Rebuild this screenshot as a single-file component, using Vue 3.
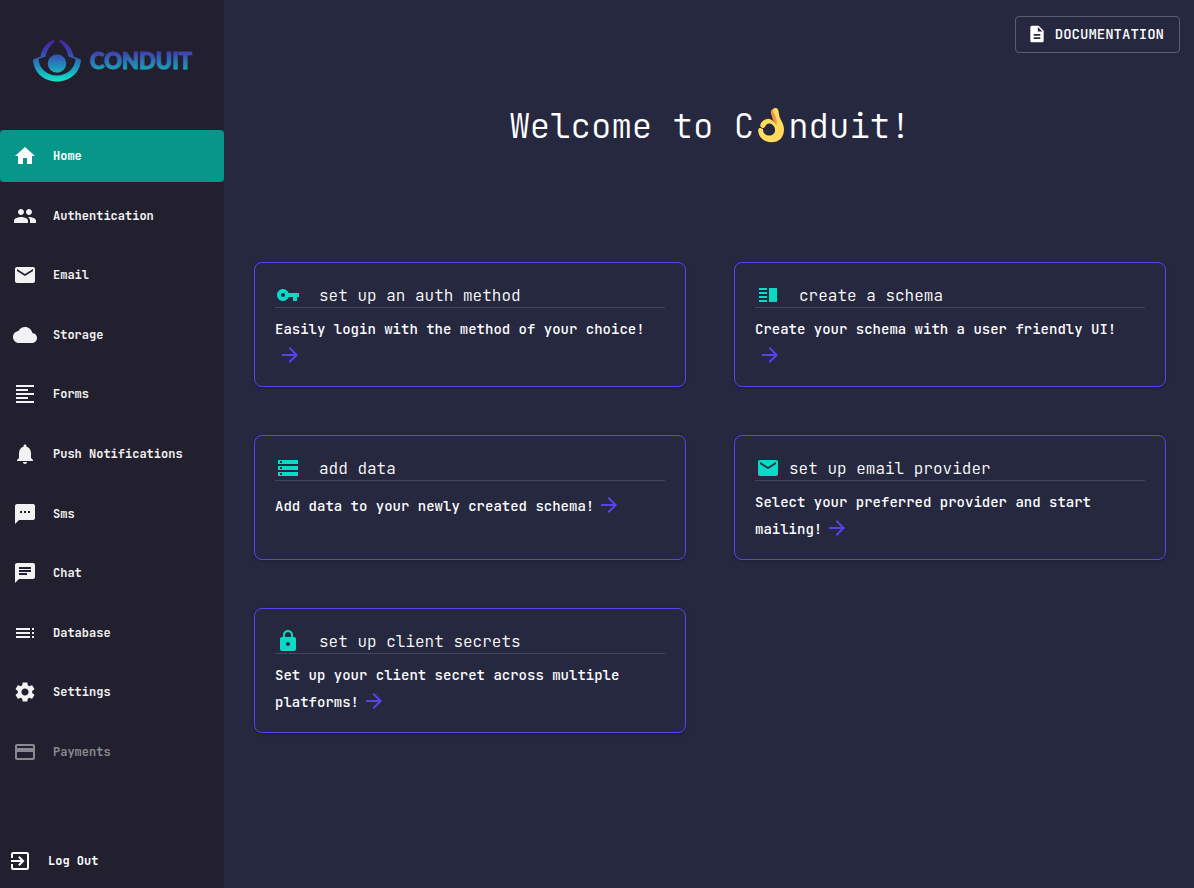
<script setup>
const icons = {
  home: 'M10 20v-6h4v6h5v-8h3L12 3 2 12h3v8z',
  people: 'M16 11c1.66 0 2.99-1.34 2.99-3S17.66 5 16 5c-1.66 0-3 1.34-3 3s1.34 3 3 3zm-8 0c1.66 0 2.99-1.34 2.99-3S9.66 5 8 5C6.34 5 5 6.34 5 8s1.34 3 3 3zm0 2c-2.33 0-7 1.17-7 3.5V19h14v-2.5c0-2.33-4.67-3.5-7-3.5zm8 0c-.29 0-.62.02-.97.05 1.16.84 1.97 1.97 1.97 3.45V19h6v-2.5c0-2.33-4.67-3.5-7-3.5z',
  email: 'M20 4H4c-1.1 0-1.99.9-1.99 2L2 18c0 1.1.9 2 2 2h16c1.1 0 2-.9 2-2V6c0-1.1-.9-2-2-2zm0 4l-8 5-8-5V6l8 5 8-5v2z',
  cloud: 'M19.35 10.04C18.67 6.59 15.64 4 12 4 9.11 4 6.6 5.64 5.35 8.04 2.34 8.36 0 10.91 0 14c0 3.31 2.69 6 6 6h13c2.76 0 5-2.24 5-5 0-2.64-2.05-4.78-4.65-4.96z',
  forms: 'M15 15H3v2h12v-2zm0-8H3v2h12V7zM3 13h18v-2H3v2zm0 8h18v-2H3v2zM3 3v2h18V3H3z',
  bell: 'M12 22c1.1 0 2-.9 2-2h-4c0 1.1.89 2 2 2zm6-6v-5c0-3.07-1.64-5.64-4.5-6.32V4c0-.83-.67-1.5-1.5-1.5s-1.5.67-1.5 1.5v.68C7.63 5.36 6 7.92 6 11v5l-2 2v1h16v-1l-2-2z',
  sms: 'M20 2H4c-1.1 0-1.99.9-1.99 2L2 22l4-4h14c1.1 0 2-.9 2-2V4c0-1.1-.9-2-2-2zM9 11H7V9h2v2zm4 0h-2V9h2v2zm4 0h-2V9h2v2z',
  chat: 'M20 2H4c-1.1 0-1.99.9-1.99 2L2 22l4-4h14c1.1 0 2-.9 2-2V4c0-1.1-.9-2-2-2zM6 9h12v2H6V9zm8 5H6v-2h8v2zm4-6H6V6h12v2z',
  toc: 'M3 9h14V7H3v2zm0 4h14v-2H3v2zm0 4h14v-2H3v2zm16 0h2v-2h-2v2zm0-10v2h2V7h-2zm0 6h2v-2h-2v2z',
  settings: 'M19.14 12.94c.04-.3.06-.61.06-.94 0-.32-.02-.64-.07-.94l2.03-1.58c.18-.14.23-.41.12-.61l-1.92-3.32c-.12-.22-.37-.29-.59-.22l-2.39.96c-.5-.38-1.03-.7-1.62-.94l-.36-2.54c-.04-.24-.24-.41-.48-.41h-3.84c-.24 0-.43.17-.47.41l-.36 2.54c-.59.24-1.13.57-1.62.94l-2.39-.96c-.22-.08-.47 0-.59.22L2.74 8.87c-.12.21-.08.47.12.61l2.03 1.58c-.05.3-.09.63-.09.94s.02.64.07.94l-2.03 1.58c-.18.14-.23.41-.12.61l1.92 3.32c.12.22.37.29.59.22l2.39-.96c.5.38 1.03.7 1.62.94l.36 2.54c.05.24.24.41.48.41h3.84c.24 0 .44-.17.47-.41l.36-2.54c.59-.24 1.13-.56 1.62-.94l2.39.96c.22.08.47 0 .59-.22l1.92-3.32c.12-.22.07-.47-.12-.61l-2.01-1.58zM12 15.6c-1.98 0-3.6-1.62-3.6-3.6s1.62-3.6 3.6-3.6 3.6 1.62 3.6 3.6-1.62 3.6-3.6 3.6z',
  payment: 'M20 4H4c-1.11 0-1.99.89-1.99 2L2 18c0 1.11.89 2 2 2h16c1.11 0 2-.89 2-2V6c0-1.11-.89-2-2-2zm0 14H4v-6h16v6zm0-10H4V6h16v2z',
  exit: 'M10.09 15.59L11.5 17l5-5-5-5-1.41 1.41L12.67 11H3v2h9.67l-2.58 2.59zM19 3H5c-1.11 0-2 .9-2 2v4h2V5h14v14H5v-4H3v4c0 1.1.89 2 2 2h14c1.1 0 2-.9 2-2V5c0-1.1-.9-2-2-2z',
  document: 'M14 2H6c-1.1 0-1.99.9-1.99 2L4 20c0 1.1.89 2 1.99 2H18c1.1 0 2-.9 2-2V8l-6-6zm2 16H8v-2h8v2zm0-4H8v-2h8v2zm-3-5V3.5L18.500 9H13z',
  key: 'M12.65 10C11.83 7.67 9.61 6 7 6c-3.31 0-6 2.69-6 6s2.69 6 6 6c2.61 0 4.83-1.67 5.65-4H17v4h4v-4h2v-4H12.65zM7 14c-1.1 0-2-.9-2-2s.9-2 2-2 2 .9 2 2-.9 2-2 2z',
  schema: 'M3 13h8v2H3zm0 4h8v2H3zm0-8h8v2H3zm0-4h8v2H3zm10 0h8v14h-8z',
  storage: 'M2 20h20v-4H2v4zm2-3h2v2H4v-2zM2 4v4h20V4H2zm4 3H4V5h2v2zm-4 7h20v-4H2v4zm2-3h2v2H4v-2z',
  lock: 'M18 8h-1V6c0-2.76-2.24-5-5-5S7 3.240 7 6v2H6c-1.1 0-2 .9-2 2v10c0 1.1.9 2 2 2h12c1.1 0 2-.9 2-2V10c0-1.1-.9-2-2-2zm-6 9c-1.1 0-2-.9-2-2s.9-2 2-2 2 .9 2 2-.9 2-2 2zm3.100-9H8.900V6c0-1.71 1.390-3.100 3.100-3.100s3.100 1.390 3.100 3.100v2z',
  arrow: 'M12 4l-1.410 1.410L16.170 11H4v2h12.170l-5.580 5.590L12 20l8-8z'
}

const navItems = [
  { label: 'Home', icon: 'home', active: true },
  { label: 'Authentication', icon: 'people' },
  { label: 'Email', icon: 'email' },
  { label: 'Storage', icon: 'cloud' },
  { label: 'Forms', icon: 'forms' },
  { label: 'Push Notifications', icon: 'bell' },
  { label: 'Sms', icon: 'sms' },
  { label: 'Chat', icon: 'chat' },
  { label: 'Database', icon: 'toc' },
  { label: 'Settings', icon: 'settings' },
  { label: 'Payments', icon: 'payment', disabled: true }
]

const cards = [
  { title: 'set up an auth method', icon: 'key', text: 'Easily login with the method of your choice!' },
  { title: 'create a schema', icon: 'schema', text: 'Create your schema with a user friendly UI!' },
  { title: 'add data', icon: 'storage', text: 'Add data to your newly created schema!' },
  { title: 'set up email provider', icon: 'email', text: 'Select your preferred provider and start mailing!', compact: true },
  { title: 'set up client secrets', icon: 'lock', text: 'Set up your client secret across multiple platforms!' }
]
</script>

<template>
  <div class="layout">
    <aside class="sidebar">
      <a class="brand" href="#" aria-label="Conduit">
        <svg class="logo" width="176" height="44" viewBox="0 0 176 44">
          <defs>
            <linearGradient id="brand-fill" gradientUnits="userSpaceOnUse" x1="0" y1="1" x2="0" y2="43">
              <stop offset="0" stop-color="#4a22a5" />
              <stop offset="0.28" stop-color="#3f3fb0" />
              <stop offset="0.6" stop-color="#2388bb" />
              <stop offset="1" stop-color="#0eeac8" />
            </linearGradient>
            <linearGradient id="word-fill" gradientUnits="userSpaceOnUse" x1="0" y1="13" x2="0" y2="32">
              <stop offset="0" stop-color="#4040b0" />
              <stop offset="1" stop-color="#18a9bd" />
            </linearGradient>
          </defs>
          <g fill="url(#brand-fill)">
            <circle cx="25" cy="24.500" r="9.200" />
            <path d="M21 1C22.500.7 23.300 1.800 22.300 3C17.500 7 14.800 11.500 13.500 17.500L6.500 20C7 28.500 14 36.500 25 36.500S43 28.500 43.500 20L36.500 17.500C35.200 11.500 32.500 7 27.700 3C26.700 1.800 27.500.7 29 1C36 4 40.500 10.500 41.500 17.500L49 20.500C48.500 33 38.500 42.500 25 42.500S1.500 33 1 20.500L8.500 17.500C9.500 10.500 14 4 21 1Z" />
          </g>
          <text class="wordmark" x="58" y="30" fill="url(#word-fill)" stroke="url(#word-fill)">CONDUIT</text>
        </svg>
      </a>

      <nav class="nav">
        <a
          v-for="item in navItems"
          :key="item.label"
          href="#"
          class="nav-item"
          :class="{ active: item.active, disabled: item.disabled }"
          :aria-disabled="item.disabled"
        >
          <svg class="icon" viewBox="0 0 24 24"><path :d="icons[item.icon]" /></svg>
          <span>{{ item.label }}</span>
        </a>
      </nav>

      <button type="button" class="logout">
        <svg class="icon" viewBox="0 0 24 24"><path :d="icons.exit" /></svg>
        <span>Log Out</span>
      </button>
    </aside>

    <main class="main">
      <div class="toolbar">
        <a class="docs" href="#">
          <svg class="docs-icon" viewBox="0 0 24 24"><path :d="icons.document" /></svg>
          <span>DOCUMENTATION</span>
        </a>
      </div>

      <h1 class="welcome">
        <span>Welcome to C</span>
        <svg class="hand" viewBox="-1 1 34 36" role="img" aria-label="o">
          <path fill="#ef9645" d="M18.500 1.500C16 2.500 15.500 4.500 16 6.500L19.500 18L25 20L24 8Z" />
          <path fill="#ffdc5d" fill-rule="evenodd" d="M18.500 2C20 .2 22.700.8 23.400 3.500L24.500 10C26 13.500 29 17 29 22.500C29 30.500 24 35.300 16.500 35.300C8.500 35.300 3 29.500 3.200 23C3.300 21 5.400 20.500 6.600 21.500L8 22C8 26 10.300 28.500 14 28.500C18 28.500 20.500 25.500 20 22C19.700 19.700 18.200 18 16 16.800C13 16 11.500 17 10 19.700C8.500 22 5.500 21 5.200 18.500C5.500 15.500 8.500 12.500 12.500 12C15.500 11.300 18 13.500 21.500 18.500C22 15 22 11 18.500 5.500C17.900 4.200 17.900 3 18.500 2Z" />
        </svg>
        <span>nduit!</span>
      </h1>

      <section class="cards">
        <article v-for="card in cards" :key="card.title" class="card">
          <h2 class="card-title" :class="{ compact: card.compact }">
            <svg class="icon" viewBox="0 0 24 24"><path :d="icons[card.icon]" /></svg>
            <span>{{ card.title }}</span>
          </h2>
          <p class="card-text">{{ card.text }}<button type="button" class="go" :aria-label="card.title"><svg class="icon" viewBox="0 0 24 24"><path :d="icons.arrow" /></svg></button></p>
        </article>
      </section>
    </main>
  </div>
</template>

<style>
body {
  margin: 0;
  background: #262840;
}
</style>

<style scoped>
.layout {
  display: flex;
  min-height: 100vh;
  color: #fff;
  background: #262840;
  font-family: "JetBrains Mono", "DejaVu Sans Mono", "Liberation Mono", monospace;
}

.layout * {
  box-sizing: border-box;
}

.icon {
  flex: none;
  display: block;
  width: 24px;
  height: 24px;
  fill: currentColor;
}

.sidebar {
  flex: none;
  display: flex;
  flex-direction: column;
  width: 224px;
  background: #22202e;
}

.brand {
  display: block;
  height: 130px;
  padding: 39px 16px 0 32px;
}

.logo {
  display: block;
}

.wordmark {
  font-family: Lato, "Open Sans", sans-serif;
  font-size: 22px;
  font-weight: 900;
  stroke-width: 1px;
}

.nav {
  flex: 1;
  display: flex;
  flex-direction: column;
  justify-content: space-between;
}

.nav-item {
  display: flex;
  align-items: center;
  gap: 16px;
  height: 52px;
  padding: 0 13px;
  border-radius: 4px;
  color: #f2f2f2;
  font-size: 12px;
  font-weight: 700;
  text-decoration: none;
}

.nav-item.active {
  background: #07968a;
  color: #fff;
}

.nav-item.disabled {
  color: #8a8990;
}

.logout {
  display: flex;
  align-items: center;
  gap: 16px;
  height: 54px;
  margin-top: 56px;
  padding: 0 8px;
  border: 0;
  background: none;
  color: #fff;
  font: inherit;
  font-size: 12px;
  font-weight: 700;
}

.main {
  flex: 1;
  min-width: 0;
}

.toolbar {
  display: flex;
  justify-content: flex-end;
  padding: 16px 14px 0;
}

.docs {
  display: flex;
  align-items: center;
  gap: 8px;
  height: 37px;
  padding: 0 15px 2px 11px;
  border: 1px solid #5c5d6f;
  border-radius: 4px;
  color: #fff;
  font-size: 14px;
  font-weight: 500;
  text-decoration: none;
}

.docs-icon {
  width: 20px;
  height: 20px;
  fill: currentColor;
}

.welcome {
  display: flex;
  justify-content: center;
  align-items: center;
  margin: 51px 0 0;
  padding-left: 2px;
  font-size: 34px;
  font-weight: 300;
  line-height: 44px;
}

.hand {
  width: 34px;
  height: 36px;
}

.cards {
  display: grid;
  grid-template-columns: 1fr 1fr;
  gap: 48px;
  padding: 114px 28px 48px 30px;
}

.card {
  min-height: 125px;
  padding: 20px 20px 12px;
  border: 1px solid #5a42ed;
  border-radius: 8px;
  box-shadow: 0 1px 3px rgba(0, 0, 0, 0.25);
}

.card-title {
  display: flex;
  gap: 19px;
  height: 25px;
  margin: 0;
  padding-left: 1px;
  border-bottom: 1px solid #45465d;
  font-size: 16px;
  font-weight: 300;
  line-height: 26px;
}

.card-title.compact {
  gap: 9px;
}

.card-title .icon {
  color: #0ad9c5;
}

.card-text {
  margin: 10px 0 0;
  font-size: 14px;
  font-weight: 500;
  line-height: 23px;
}

.go {
  display: inline-flex;
  padding: 2px 3px 6px;
  border: 0;
  background: none;
  color: #5a42ed;
  vertical-align: middle;
}
</style>
